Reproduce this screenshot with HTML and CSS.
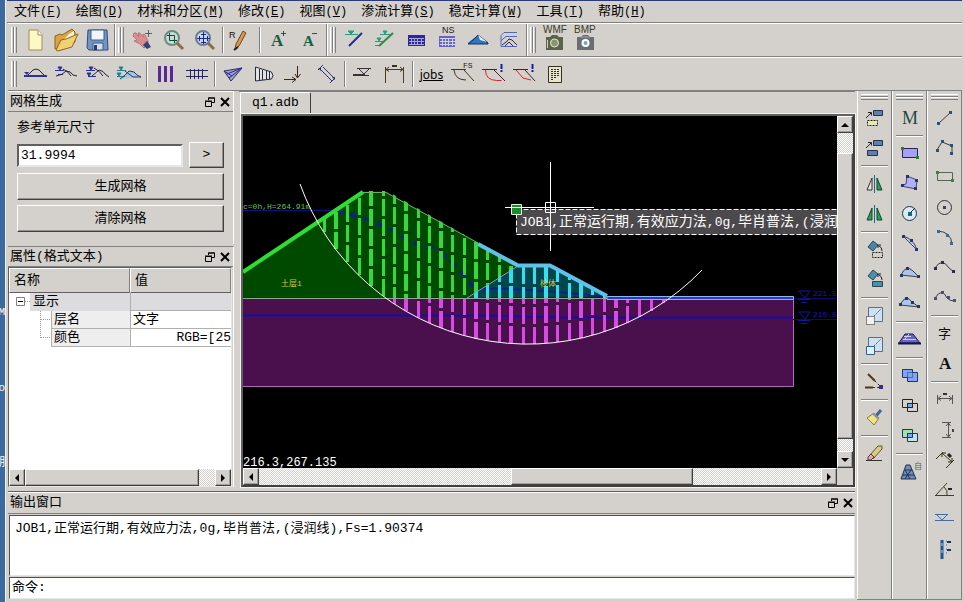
FILE: index.html
```html
<!DOCTYPE html>
<html lang="zh-CN">
<head>
<meta charset="utf-8">
<title>q1.adb</title>
<link rel="stylesheet" href="styles.css">
</head>
<body>
<aside class="desktop"><span class="d1">M</span><span class="d2">o</span><span class="d3">期</span></aside>
<div class="app">
<nav class="menubar">
<button>文件<kbd>(<u>F</u>)</kbd></button><button>绘图<kbd>(<u>D</u>)</kbd></button><button>材料和分区<kbd>(<u>M</u>)</kbd></button><button>修改<kbd>(<u>E</u>)</kbd></button><button>视图<kbd>(<u>V</u>)</kbd></button><button>渗流计算<kbd>(<u>S</u>)</kbd></button><button>稳定计算<kbd>(<u>W</u>)</kbd></button><button>工具<kbd>(<u>T</u>)</kbd></button><button>帮助<kbd>(<u>H</u>)</kbd></button>
</nav>

<div class="toolbar">
<div class="group"><i class="grip"></i>
<button aria-label="新建"><svg viewBox="0 0 31 30"><path d="M9 5h9l4 5v15H9z" fill="#fdf8c4" stroke="#9c8f55"/><path d="M18 5v5h4" fill="#fff" stroke="#9c8f55"/></svg></button>
<button aria-label="打开"><svg viewBox="0 0 31 30"><path d="M4 24V11l5-2 2 1 10-6 3 3v10z" fill="#d9a441" stroke="#8a6420"/><path d="M7 21 18 9l5-3v6z" fill="#fff6d8" stroke="none"/><path d="M5 25l5-10 5-1 12-5-6 13-14 4z" fill="#f3cf73" stroke="#8a6420"/></svg></button>
<button aria-label="保存"><svg viewBox="0 0 31 30"><path d="M6 5l19 0 1 20-19 0-2-2z" fill="#6f97c4" stroke="#2f4c78"/><path d="M9 5h13v10H9z" fill="#f2f6fb" stroke="#3c5a85"/><path d="M11 18h10v7H11z" fill="#d7dde6" stroke="#3c5a85"/><path d="M12 20h3v5h-3z" fill="#26406b" stroke="none"/></svg></button>
</div>
<div class="group"><i class="grip"></i>
<button aria-label="平移"><svg viewBox="0 0 31 30"><path d="M7 8l2 0 3 4-1-4 2 0 3 4 0-3 2 1 3 6 0 4-4 3-4-4-6-3 3-1-4-4z" fill="#d98f92" stroke="#b9747a"/><path d="M16 20l4-4 4 6-4 2z" fill="#38407a" stroke="none"/><path d="M21.500 5v7M18 8.500h7" stroke="#47627e"/></svg></button>
<button aria-label="窗口缩放"><svg viewBox="0 0 31 30"><circle cx="14" cy="13" r="7" fill="#c9ddd8" stroke="#6e8886" stroke-width="2"/><path d="M11.500 10.500h5v5h-5zM9 10.500h2M16 15.500h3M11.500 8v3M16.500 15v3" stroke="#124b34"/><path d="M19 18l6 6" stroke="#8c6d47" stroke-width="3"/></svg></button>
<button aria-label="全部缩放"><svg viewBox="0 0 31 30"><circle cx="14" cy="13" r="7" fill="#cbd6ec" stroke="#6e7d96" stroke-width="2"/><path d="M14.500 7v12M8 13.500h13M12 9.500h5M12 17.500h5M10.500 11v5M18.500 11v5" stroke="#172a7c"/><path d="M19 18l6 6" stroke="#8c6d47" stroke-width="3"/></svg></button>
<i class="sep"></i>
<button aria-label="重画"><svg viewBox="0 0 31 30"><text x="3" y="13" class="f9" fill="#111">R</text><path d="M9 24l1-5L17 6l3 2-7 13z" fill="#d69a4d" stroke="#6a4820"/><path d="M8 25l4-3" stroke="#222" stroke-width="2"/></svg></button>
<i class="sep"></i>
<button aria-label="放大文字"><svg viewBox="0 0 31 30"><text x="8" y="21" class="serif f16" fill="#11633e">A</text><path d="M18 8.500h5M20.500 6v5" stroke="#11633e"/></svg></button>
<button aria-label="缩小文字"><svg viewBox="0 0 31 30"><text x="9" y="21" class="serif f14" fill="#11633e">A</text><path d="M18 8.500h5" stroke="#11633e"/></svg></button>
</div>
<div class="group"><i class="grip"></i>
<button aria-label="水位线"><svg viewBox="0 0 31 30"><path d="M6 9.500h13M9 6l3 3 3-3z" fill="#2d9c7a" stroke="#2d9c7a"/><path d="M23 8L10 21" stroke="#21308f" stroke-width="2"/></svg></button>
<button aria-label="水位变化"><svg viewBox="0 0 31 30"><path d="M10 9.500h11M13 6l2 3 2-3zM5 16.500h9M7 13l2 3 2-3zM5 20.500h6" fill="#2d9c7a" stroke="#2d9c7a"/><path d="M23 8L9 21" stroke="#2c8c50" stroke-width="2"/></svg></button>
<button aria-label="表格"><svg viewBox="0 0 31 30"><path d="M7 10h17v11H7z" fill="#2b279c" stroke="none"/><path d="M10.500 13v7M13.500 13v7M16.500 13v7M20.500 13v7M8 13.500h15M8 16.500h15M8 19.500h15" stroke="#a6a5de"/></svg></button>
<button aria-label="NS 表格"><svg viewBox="0 0 31 30"><text x="10" y="8" class="f9" fill="#222">NS</text><path d="M7 11h16v11H7z" fill="#6a65bc" stroke="none"/><path d="M10.500 13v8M13.500 13v8M16.500 13v8M20.500 13v8M8 13.500h15M8 16.500h15M8 19.500h15" stroke="#d2d1f0"/></svg></button>
<button aria-label="浸润区"><svg viewBox="0 0 31 30"><path d="M5 18q6-5 10-8l10 7v2H5z" fill="#2f75c0" stroke="none"/><path d="M5 19q7-5 10-9l10 8v1z" stroke="#14325c"/><path d="M15 10l9 7-7-2z" fill="#e5edf5" stroke="none"/></svg></button>
<button aria-label="等值线"><svg viewBox="0 0 31 30"><path d="M23 7.500H10l-3 3v11M23 11.500H12l-5 4M7 21.500h16" stroke="#5267b8"/><path d="M8 20q5-3 7-6l3 1 5 5M11 21l4-4 4 4" stroke="#222c60"/></svg></button>
</div>
<div class="group last"><i class="grip"></i>
<button aria-label="WMF"><svg viewBox="0 0 31 30"><text x="4" y="8" class="f10" fill="#3c3a1e">WMF</text><path d="M7 12h4l2-2h5l2 2h4v13H7z" fill="#5c6447" stroke="none"/><circle cx="15.500" cy="18" r="4" fill="#8b9472" stroke="#e5e8da"/><path d="M8.500 15v8" stroke="#cdd2bd"/></svg></button>
<button aria-label="BMP"><svg viewBox="0 0 31 30"><text x="4" y="8" class="f10" fill="#3c3a1e">BMP</text><path d="M7 12h4l2-2h5l2 2h4v13H7z" fill="#6c6d72" stroke="none"/><circle cx="15.500" cy="18" r="3" fill="#72a3c9" stroke="#fff" stroke-width="2"/><path d="M10 12h10" stroke="#a6a8b0"/></svg></button>
</div>
</div>

<div class="toolbar">
<div class="group last"><i class="grip"></i>
<button aria-label="断面"><svg viewBox="0 0 31 30"><path d="M4 17h23" stroke="#2b2f99" stroke-width="2"/><path d="M8 16l5-5q3-2 6 0l5 5" stroke="#223"/><path d="M4 13h5l-2 3z" fill="#2b2f99" stroke="none"/></svg></button>
<button aria-label="稳定渗流"><svg viewBox="0 0 31 30"><path d="M4 11.500h9M7 15.500h5M7 8h4l-2 3z" fill="#2b2f99" stroke="#2b2f99"/><path d="M5 17q7-1 10-5 5 0 7 4l4 1M12 10q6 3 8 7" stroke="#223"/></svg></button>
<button aria-label="水位降落"><svg viewBox="0 0 31 30"><path d="M4 11.500h9M6 17.500h8M7 8h4l-2 3zM5 14h4l-2 3z" fill="#2b2f99" stroke="#2b2f99"/><path d="M10 17q5-4 7-6 5 1 6 4l4 3M12 9q6 3 9 8" stroke="#223"/></svg></button>
<button aria-label="非稳定渗流"><svg viewBox="0 0 31 30"><path d="M7 20q6-4 9-8 6 1 9 6z" fill="#a6c5df" stroke="none"/><path d="M4 11.500h9M4 17.500h8M6 8h4l-2 3zM4 14h4l-2 3z" fill="#277a8c" stroke="#277a8c"/><path d="M7 20q6-4 9-8 6 0 8 4l4 2h-8l-8-6" stroke="#223a66"/></svg></button>
<i class="sep"></i>
<button aria-label="竖向划分"><svg viewBox="0 0 31 30"><path d="M9.500 7v16M15.500 7v16M21.500 7v16" stroke="#5b2798" stroke-width="3"/></svg></button>
<button aria-label="横向划分"><svg viewBox="0 0 31 30"><path d="M5 11.500h22M5 17.500h22M9.500 10v10M13.500 10v10M17.500 10v10M21.500 10v10" stroke="#26265f"/></svg></button>
<i class="sep"></i>
<button aria-label="三角荷载"><svg viewBox="0 0 31 30"><path d="M6 12L24 9 13 22zM9 15l15-6M11 19l13-10M6 12l8 5" fill="#9fa2d4" stroke="#2a2d75"/></svg></button>
<button aria-label="梯形荷载"><svg viewBox="0 0 31 30"><path d="M6.500 8v14l16-2q3-3 0-7zM10.500 10v11M13.500 11v10M17.500 12v8M20.500 13v7" fill="#e1e2e5" stroke="#222b3a"/></svg></button>
<button aria-label="集中力"><svg viewBox="0 0 31 30"><path d="M17.500 7v11M15 15l2.500 4 3-4M4 20.500h12M12 18l4 2.500-4 3" stroke="#3e2414"/></svg></button>
<button aria-label="锚杆"><svg viewBox="0 0 31 30"><path d="M9 10L21 22M12 8l12 12M7 11l5-5M19 24l5-5" stroke="#2a3478"/><path d="M7 9h3v3zM21 18h3v3z" fill="#2a3478" stroke="none"/></svg></button>
<i class="sep"></i>
<button aria-label="水面"><svg viewBox="0 0 31 30"><path d="M9 9.500h14M11 10l5 5 5-5M5 16.500h16" stroke="#3b2f38"/><path d="M5 16h12" stroke="#3b2f38" stroke-width="2"/></svg></button>
<button aria-label="标注"><svg viewBox="0 0 31 30"><path d="M6.500 8v16M24.500 8v16M7 10.500h17M10 8l-3 2.500 3 2M21 8l3 2.500-3 2" stroke="#4b3b1f"/><path d="M13 7h5" stroke="#3b2f18" stroke-width="2"/></svg></button>
<i class="sep"></i>
<button class="jobs"><u>jobs</u></button>
<button aria-label="安全系数"><svg viewBox="0 0 31 30"><text x="16" y="9" class="f8" fill="#2b1b16">FS</text><path d="M4 10.500h15M7 11q1 10 12 10M17 11L27 22" stroke="#3d332b"/></svg></button>
<button aria-label="搜索圆弧"><svg viewBox="0 0 31 30"><path d="M7.500 11q0 10 11 10.500h5" stroke="#d6252b"/><path d="M4 10.500h15M16 11L27 22" stroke="#4a2327"/><path d="M23.500 5v5M23.500 11v2" stroke="#17209b" stroke-width="2"/></svg></button>
<button aria-label="搜索折线"><svg viewBox="0 0 31 30"><path d="M7 11l7 8 8 2" stroke="#d6252b"/><path d="M4 10.500h15M16 11L26 22" stroke="#4a2327"/><path d="M23.500 5v5M23.500 11v2" stroke="#17209b" stroke-width="2"/></svg></button>
<button aria-label="报告"><svg viewBox="0 0 31 30"><path d="M8.500 7.500h13v16h-13z" fill="#e6e3cf" stroke="#33301d"/><path d="M11 10.500h9M11 12.500h9M11 14.500h9M11 16.500h9M11 18.500h6M11 20.500h3" stroke="#33301d" stroke-dasharray="2 1"/></svg></button>
</div>
</div>

<main class="work">
<div class="left">
<div class="upper">
<div class="docks">
<section class="dock">
<header class="title"><h2>网格生成</h2><button aria-label="浮动"><svg viewBox="0 0 10 10"><path d="M3.500 3V1h6v4.500H7M3 1h7M.5 4.500h6v5h-6zM0 4h7" /></svg></button><button aria-label="关闭"><svg viewBox="0 0 10 10"><path d="M1 1l8 8M9 1L1 9" stroke-width="2"/></svg></button></header>
<form class="mesh">
<label for="size">参考单元尺寸</label>
<div class="line"><input id="size" type="text" value="31.9994"><button type="button" class="push">&gt;</button></div>
<button type="button" class="push">生成网格</button>
<button type="button" class="push">清除网格</button>
</form>
</section>
<section class="dock props">
<header class="title"><h2>属性(格式文本)</h2><button aria-label="浮动"><svg viewBox="0 0 10 10"><path d="M3.500 3V1h6v4.500H7M3 1h7M.5 4.500h6v5h-6zM0 4h7" /></svg></button><button aria-label="关闭"><svg viewBox="0 0 10 10"><path d="M1 1l8 8M9 1L1 9" stroke-width="2"/></svg></button></header>
<div class="sheet">
<table>
<colgroup><col class="c1"><col class="c2"><col></colgroup>
<thead><tr><th colspan="2">名称</th><th>值</th></tr></thead>
<tbody>
<tr class="cat"><td colspan="2" class="parent"><div><svg viewBox="0 0 21 18"><path d="M7.500 4.500h8v8h-8z" stroke="#808080"/><path d="M9 8.500h5" stroke="#000"/><path d="M16 8.500h5" stroke="#999" stroke-dasharray="1 1"/></svg><span>显示</span></div></td><td></td></tr>
<tr><td class="tree"><svg viewBox="0 0 42 18"><path d="M31.500 0v18M32 8.500h9" stroke="#999" stroke-dasharray="1 1"/></svg></td><td class="name">层名</td><td>文字</td></tr>
<tr><td class="tree"><svg viewBox="0 0 42 18"><path d="M31.500 0v9M32 8.500h9" stroke="#999" stroke-dasharray="1 1"/></svg></td><td class="name">颜色</td><td class="num">RGB=[25</td></tr>
</tbody>
</table>
<div class="hbar"><button aria-label="向左"><svg viewBox="0 0 8 8"><path d="M6 0v8L2 4z"/></svg></button><i class="thumb wide"></i><i class="rest"></i><button aria-label="向右"><svg viewBox="0 0 8 8"><path d="M2 0v8l4-4z"/></svg></button></div>
</div>
</section>
</div>

<section class="view">
<div class="tabs"><button class="tab">q1.adb</button></div>
<div class="frame">
<svg class="drawing" viewBox="243 116 594 352" preserveAspectRatio="xMinYMin slice">
<defs>
<clipPath id="green"><path d="M243 272L363 191H387L518 265 467 298H243z"/></clipPath>
<clipPath id="cyan"><path d="M518 264H551L610 298H467z"/></clipPath>
<clipPath id="violet"><path d="M243 298H793V387H243z"/></clipPath>
<g id="slices">
<path stroke-width="3" stroke-dasharray="17 3" d="M324.500 232V190M347.500 262V190M359.500 275V190M383.500 296V180M394.500 304V180M418.500 318V180M429.500 323V180M452.500 332V180M464.500 335V180M487.500 340V180M499.500 342V180M523.500 344V180M534.500 344V180M557.500 342V180M569.500 340V180M592.500 335V180M604.500 332V180M627.500 323V180M639.500 317V180M651.500 311V180M663.500 303V180"/>
<path stroke-width="4" stroke-dasharray="17 3" d="M336 249V180M371 286V180M406 311V180M441 328V180M476 339V180M511 343V180M546 343V180M581 338V180M616 328V180"/>
</g>
</defs>
<path d="M243 272L363 192H386L518 265 467 298H243z" fill="#004a00"/>
<path d="M518 265H550L607 297 467 298z" fill="#00474d"/>
<path d="M243 298.500H793.500V386.500H243" fill="#4a104d" stroke="#b06ab8"/>
<path d="M243 210.500H336" stroke="#101080"/>
<path d="M336 211Q375 219 400 235T430 248 455 266 473 288" stroke="#10208a" stroke-width="3" stroke-dasharray="9 5"/>
<path d="M473 288Q520 289 546 291T607 297" stroke="#10208a" stroke-width="2"/>
<path d="M243 315.500H480L560 317.500H793" stroke="#1a0aa8" stroke-width="2"/>
<g clip-path="url(#green)"><use href="#slices" stroke="#35da3a"/></g>
<g clip-path="url(#cyan)"><use href="#slices" stroke="#35e0ee"/></g>
<g clip-path="url(#violet)"><use href="#slices" stroke="#d84be0"/></g>
<path d="M793 298.500H837M793 319.500H837" stroke="#0c0c70"/>
<path d="M243 298.500H610M467 298L518 266" stroke="#8fa896"/>
<path d="M607 296.500H793.500V299.500H607z" fill="#1f3cc8" stroke="#8fb4f0"/>
<path d="M363 192.500H386L478 243" stroke="#6fae6a"/>
<path d="M243 272L363 192" stroke="#2fdc34" stroke-width="4"/>
<path d="M478 244L518 265.500H550L607 296" stroke="#5fc0e8" stroke-width="4"/>
<path d="M300 184A242 242 0 0 0 702 270" stroke="#fff"/>
<g stroke="#1414a8"><path d="M799 291h11l-5 7zM798 299.500h12M801 302.500h6M799 312h11l-5 7zM798 320.500h12M801 323.500h6"/></g>
<g class="f8"><text x="243" y="209" fill="#63c065">c=0h,H=264.91m</text><text x="813" y="296" fill="#1818b4">221.5</text><text x="813" y="317" fill="#1818b4">210.5</text><text x="281" y="286" fill="#d0c64a">土层1</text><text x="540" y="286" fill="#d0c64a">棱体</text></g>
<path d="M516.500 209.500H860V234.500H516.500z" fill="#4b494b" stroke="#fff" stroke-dasharray="5 2"/>
<path d="M511.500 204.500h10v10h-10z" fill="#1f8a2a" stroke="#dff5df"/>
<text class="note" x="520" y="226" fill="#fff">JOB1,<tspan>正常运行期</tspan>,<tspan>有效应力法</tspan>,0g,<tspan>毕肖普法</tspan>,(<tspan>浸润</tspan></text>
<path d="M505 207.500H594M550.500 162V251M545.500 202.500h10v10h-10z" stroke="#fff"/>
<text class="coord" x="243" y="466" fill="#fff">216.3,267.135</text>
</svg>
<div class="vbar"><button aria-label="向上"><svg viewBox="0 0 8 8"><path d="M0 6h8L4 2z"/></svg></button><i class="gap"></i><i class="thumb tall"></i><i class="low"></i><button aria-label="向下"><svg viewBox="0 0 8 8"><path d="M0 2h8L4 6z"/></svg></button></div>
<div class="hbar"><button aria-label="向左"><svg viewBox="0 0 8 8"><path d="M6 0v8L2 4z"/></svg></button><i class="before"></i><i class="thumb mid"></i><i class="after"></i><button aria-label="向右"><svg viewBox="0 0 8 8"><path d="M2 0v8l4-4z"/></svg></button></div>
</div>
</section>
</div>

<section class="dock output">
<header class="title"><h2>输出窗口</h2><button aria-label="浮动"><svg viewBox="0 0 10 10"><path d="M3.500 3V1h6v4.500H7M3 1h7M.5 4.500h6v5h-6zM0 4h7" /></svg></button><button aria-label="关闭"><svg viewBox="0 0 10 10"><path d="M1 1l8 8M9 1L1 9" stroke-width="2"/></svg></button></header>
<div class="log">JOB1,正常运行期,有效应力法,0g,毕肖普法,(浸润线),Fs=1.90374</div>
<div class="command"><label for="cmd">命令:</label><input id="cmd" type="text"></div>
</section>
</div>

<div class="palettes">
<div class="palette"><i class="grip"></i>
<button aria-label="移动"><svg viewBox="0 0 30 30"><path d="M13.500 7.500h9v5h-9z" fill="#5f7fae" stroke="#26324a"/><path d="M7.500 17.500h10v5h-10z" fill="#e8e7b4" stroke="#222" stroke-dasharray="2 1"/><path d="M6 15l5-5M8 9.500h3.500v3" stroke="#222"/></svg></button>
<button aria-label="复制"><svg viewBox="0 0 30 30"><path d="M13.500 7.500h9v5h-9zM7.500 17.500h10v5h-10z" fill="#5f7fae" stroke="#26324a"/><path d="M6 15l5-5M8 9.500h3.500v3" stroke="#222"/></svg></button>
<i class="sep"></i>
<button aria-label="镜像移动"><svg viewBox="0 0 30 30"><path d="M12 9v12H7z" fill="#e5e5e5" stroke="#333"/><path d="M17 9v12h5z" fill="#2e9a63" stroke="#14452c"/><path d="M14.500 6v18" stroke="#1b6a86"/></svg></button>
<button aria-label="镜像复制"><svg viewBox="0 0 30 30"><path d="M12 9v12H7zM17 9v12h5z" fill="#2e9a63" stroke="#14452c"/><path d="M14.500 6v18" stroke="#1b6a86"/></svg></button>
<i class="sep"></i>
<button aria-label="旋转移动"><svg viewBox="0 0 30 30"><path d="M8 12l5-6 5 4-5 6z" fill="#4b83a8" stroke="#254759"/><path d="M12.500 17.500h10v5h-10z" stroke="#222" stroke-dasharray="2 1"/><path d="M19 11q3 1 3 5M18 13v-3h3" stroke="#222"/></svg></button>
<button aria-label="旋转复制"><svg viewBox="0 0 30 30"><path d="M8 11l5-6 5 4-5 6zM12.500 16.500h10v5h-10z" fill="#4b90a8" stroke="#254759"/><path d="M19 10q3 1 3 5M18 12v-3h3" stroke="#222"/></svg></button>
<i class="sep"></i>
<button aria-label="缩放移动"><svg viewBox="0 0 30 30"><path d="M8.500 6.500h14v14h-14z" fill="#cfe0ef" stroke="#50708e"/><path d="M6.500 15.500h8v8h-8z" fill="#f2f2f2" stroke="#222" stroke-dasharray="1 1"/><path d="M14 15l7-7" stroke="#4c6684" stroke-dasharray="2 1"/></svg></button>
<button aria-label="缩放复制"><svg viewBox="0 0 30 30"><path d="M8.500 6.500h14v14h-14z" fill="#cfe0ef" stroke="#50708e"/><path d="M6.500 15.500h8v8h-8z" fill="#e1f1fa" stroke="#2e628e"/><path d="M14 15l7-7" stroke="#4c6684" stroke-dasharray="2 1"/></svg></button>
<i class="sep"></i>
<button aria-label="延伸"><svg viewBox="0 0 30 30"><path d="M8 7l7 7M5 20.500h8" stroke="#4b3a12" stroke-width="2"/><path d="M15 14l6 6M13 20.500h9" stroke="#33263a" stroke-dasharray="2 2"/><path d="M19 18h4v4h-4z" fill="#3b2c86" stroke="none"/></svg></button>
<i class="sep"></i>
<button aria-label="格式刷"><svg viewBox="0 0 30 30"><path d="M21 7l-5 6" stroke="#49628f" stroke-width="3"/><path d="M14 10l5 5-5 7-7-7z" fill="#efe287" stroke="#8a7a35"/><path d="M14 10l5 5-2 1-5-5z" fill="#8696b3" stroke="none"/></svg></button>
<i class="sep"></i>
<button aria-label="删除"><svg viewBox="0 0 30 30"><path d="M10 16L18 7h4v3L13 20z" fill="#d8cd82" stroke="#5c5632"/><path d="M8 18l3-3 3 3-3 3H8z" fill="#e6a7aa" stroke="#60383a"/><path d="M6 21.500h16" stroke="#333"/></svg></button>
</div>
<div class="palette"><i class="grip"></i>
<button aria-label="材料"><svg viewBox="0 0 30 30"><text x="7" y="21" class="roman f18" fill="#1d4a45">M</text></svg></button>
<i class="sep"></i>
<button aria-label="矩形区"><svg viewBox="0 0 30 30"><path d="M7.500 9.500h15v9h-15z" fill="#a6a0f2" stroke="#25245a"/><path d="M6 8h3v3H6zM21 17h3v3h-3z" fill="#2f7d33" stroke="none"/></svg></button>
<button aria-label="多边形区"><svg viewBox="0 0 30 30"><path d="M12 7l10 4-1 9-15-3 5-2z" fill="#b4b0f5" stroke="#39467a"/><path d="M11 6h3v3h-3zM20 10h3v3h-3zM19 18h3v3h-3zM6 15h3v3H6z" fill="#26366d" stroke="none"/></svg></button>
<button aria-label="圆形区"><svg viewBox="0 0 30 30"><circle cx="14.500" cy="14.500" r="7" fill="#d9ecf5" stroke="#22303d"/><path d="M14 15l6-6" stroke="#1b2e7e"/><path d="M13 13h4v4h-4z" fill="#1b648a" stroke="none"/></svg></button>
<button aria-label="弓形区"><svg viewBox="0 0 30 30"><path d="M8 7q11 3 14 14z" fill="#c7cbef" stroke="#38424f"/><path d="M7 6h3v3H7zM15 10h3v3h-3zM20 19h3v3h-3z" fill="#26366d" stroke="none"/></svg></button>
<button aria-label="弧形区"><svg viewBox="0 0 30 30"><path d="M6 16q5-11 12-4l6 6z" fill="#abc4ec" stroke="#38424f"/><path d="M5 15h3v3H5zM11 8h3v3h-3zM22 16h3v3h-3z" fill="#26366d" stroke="none"/></svg></button>
<button aria-label="曲线区"><svg viewBox="0 0 30 30"><path d="M5 16q6-12 12-3l7 5z" fill="#abc4ec" stroke="#38424f"/><path d="M4 14h3v3H4zM10 8h3v3h-3zM16 12h3v3h-3zM22 16h3v3h-3z" fill="#26366d" stroke="none"/></svg></button>
<i class="sep"></i>
<button aria-label="坝体"><svg viewBox="0 0 30 30"><path d="M4 18l6-9h8l7 9z" fill="#6764cc" stroke="#171742"/><path d="M8 14.500h13M14 9l-4 5M16 11.500H9" stroke="#d0cef4"/><path d="M3 18.500h23" stroke="#171742" stroke-width="2"/></svg></button>
<i class="sep"></i>
<button aria-label="并集"><svg viewBox="0 0 30 30"><path d="M7.500 8.500h10v3h5v9h-10v-4h-5z" fill="#7fa5f5" stroke="#1f3668"/><path d="M12.500 11.500h5v5h-5z" stroke="#1f3668" stroke-dasharray="1 1"/></svg></button>
<button aria-label="交集"><svg viewBox="0 0 30 30"><path d="M7.500 8.500h10v8h-10zM12.500 12.500h10v8h-10z" stroke="#222"/><path d="M12.500 12.500h5v4h-5z" fill="#7fa5f5" stroke="#222"/></svg></button>
<button aria-label="差集"><svg viewBox="0 0 30 30"><path d="M7.500 8.500h10v8h-10z" fill="#9fe0b4" stroke="#1c3950"/><path d="M12.500 12.500h10v8h-10z" fill="#bfe5f2" stroke="#1c3950"/><path d="M12.500 12.500h5v4h-5z" fill="#7fa5f5" stroke="#1c3950"/></svg></button>
<i class="sep"></i>
<button aria-label="自动网格"><svg viewBox="0 0 30 30"><path d="M6 22l5-14h4l6 14z" fill="#6f8db5" stroke="#1f3156"/><path d="M10 13h7M8 18h11M10 13l5 9M16 13l-6 9" stroke="#1f3156"/><text x="19" y="12" class="f8" fill="#1d7a6a">自</text></svg></button>
</div>
<div class="palette"><i class="grip"></i>
<button aria-label="直线"><svg viewBox="0 0 30 30"><path d="M8 21L21 9" stroke="#3b3b3b"/><path d="M7 19h3v3H7zM19 8h3v3h-3z" fill="#2b5075" stroke="none"/></svg></button>
<button aria-label="折线"><svg viewBox="0 0 30 30"><path d="M7 17l5-8 10 4v7" stroke="#3b3b3b"/><path d="M6 16h3v3H6zM11 7h3v3h-3zM20 11h3v3h-3zM20 19h3v3h-3z" fill="#2b5075" stroke="none"/></svg></button>
<button aria-label="矩形"><svg viewBox="0 0 30 30"><path d="M7.500 9.500h15v8h-15z" stroke="#5a6454"/><path d="M6 8h3v3H6zM21 16h3v3h-3z" fill="#2f8b33" stroke="none"/></svg></button>
<button aria-label="圆"><svg viewBox="0 0 30 30"><circle cx="14.500" cy="14.500" r="7" stroke="#333"/><path d="M13 13h3v3h-3z" fill="#5a3555" stroke="none"/></svg></button>
<button aria-label="圆弧"><svg viewBox="0 0 30 30"><path d="M8 8q13 1 14 13" stroke="#3b3b3b"/><path d="M7 7h3v3H7zM16 11h3v3h-3zM20 19h3v3h-3z" fill="#3b6b93" stroke="none"/></svg></button>
<button aria-label="弧线"><svg viewBox="0 0 30 30"><path d="M5 15q7-11 14 0l5 4" stroke="#3b3b3b"/><path d="M4 14h3v3H4zM11 8h3v3h-3zM22 17h3v3h-3z" fill="#26304d" stroke="none"/></svg></button>
<button aria-label="样条曲线"><svg viewBox="0 0 30 30"><path d="M5 15q7-11 12 0 3 3 7 3" stroke="#3b3b3b"/><path d="M4 14h3v3H4zM11 8h3v3h-3zM17 13h3v3h-3zM23 16h3v3h-3z" fill="#4a5075" stroke="none"/></svg></button>
<i class="sep"></i>
<button aria-label="文字"><svg viewBox="0 0 30 30"><text x="8" y="19" class="f13" fill="#111">字</text></svg></button>
<button aria-label="字体"><svg viewBox="0 0 30 30"><text x="9" y="20" class="serif f16" fill="#111">A</text></svg></button>
<i class="sep"></i>
<button aria-label="水平标注"><svg viewBox="0 0 30 30"><path d="M7.500 10v9M22.500 10v9M8 13.500h14M11 11l-3 2.500 3 2M19 11l3 2.500-3 2" stroke="#555"/><path d="M13 9h4" stroke="#333" stroke-width="2"/></svg></button>
<button aria-label="垂直标注"><svg viewBox="0 0 30 30"><path d="M12 7.500h9M12 22.500h9M18.500 8v14M16 11l2.500-3 2 3M16 19l2.500 3 2-3" stroke="#555"/><path d="M22 14h2v3h-2z" fill="#444" stroke="none"/></svg></button>
<button aria-label="对齐标注"><svg viewBox="0 0 30 30"><path d="M6 14l7-7M16 23l8-8M12 8l10 9M12 12V8h4M18 17h4v-4" stroke="#2d3514"/><path d="M18 9l3 3" stroke="#222" stroke-width="3"/></svg></button>
<button aria-label="角度标注"><svg viewBox="0 0 30 30"><path d="M5 20.500h19M6 20L17 8M14 12q4 3 3 8" stroke="#39421a"/><path d="M18 14h4" stroke="#222" stroke-width="2"/></svg></button>
<button aria-label="水位标注"><svg viewBox="0 0 30 30"><path d="M5 9.500h13M7 10l5 5 5-5M5 15.500h19" stroke="#3f6da3"/></svg></button>
<button aria-label="柱状图"><svg viewBox="0 0 30 30"><path d="M12 5v19" stroke="#1f568f" stroke-width="3"/><path d="M12 8v3M12 15v3" stroke="#bcd0e3"/><path d="M17 7h4M17 15h4" stroke="#1d3550" stroke-width="2"/><path d="M16.500 5v16" stroke="#7ba0c6" stroke-dasharray="2 2"/></svg></button>
</div>
</div>
</main>
</div>
</body>
</html>
```
FILE: styles.css
```css
* { box-sizing: border-box; }
html, body { height: 100%; }
body {
  margin: 0;
  display: flex;
  overflow: hidden;
  background: #d4d0cb;
  color: #000;
  font: 13px/18px "Liberation Mono", "Noto Sans CJK SC", monospace;
}
button, input {
  margin: 0;
  padding: 0;
  border: 0;
  background: none;
  color: inherit;
  font: inherit;
  outline: none;
}
svg { display: block; fill: none; stroke: #222; }
svg text { stroke: none; }
i { display: block; flex: none; }

.f8 { font-size: 8px; }
.f9 { font: 9px "Liberation Sans", sans-serif; }
.f10 { font: 10px "Liberation Sans", sans-serif; }
.f13 { font-size: 13px; }
.serif { font-family: "Liberation Serif", serif; font-weight: bold; }
.roman { font-family: "Liberation Serif", serif; }
.f14 { font-size: 15px; }
.f16 { font-size: 17px; }
.f18 { font-size: 18px; }

.desktop {
  position: relative;
  flex: none;
  width: 5px;
  overflow: hidden;
  background: #3a6a9f;
  color: #fff;
  font-size: 11px;
}
.desktop span { position: absolute; right: 0; }
.d1 { top: 303px; }
.d2 { top: 379px; }
.d3 { top: 454px; }

.app {
  flex: 1;
  min-width: 0;
  display: flex;
  flex-direction: column;
  padding: 0 2px;
  border-left: 1px solid #f4f2ef;
}

.menubar {
  flex: none;
  display: flex;
  height: 23px;
  border-top: 1px solid #2a3b78;
  border-bottom: 1px solid #808080;
  margin-left: -1px;
}
.menubar button { padding: 0 7px; white-space: nowrap; }
.menubar kbd { font: 12px "Liberation Mono", monospace; }

.toolbar {
  flex: none;
  display: flex;
  height: 34px;
  border-top: 1px solid #fff;
  border-bottom: 1px solid #808080;
}
.group {
  display: flex;
  align-items: center;
  padding-right: 1px;
  border-left: 1px solid #fff;
  border-right: 1px solid #808080;
}
.group:first-child { border-left-color: transparent; }
.group.last { border-right: 0; }
.group button svg { width: 31px; height: 30px; }
.group .grip {
  width: 6px;
  height: 26px;
  margin: 0 3px 0 2px;
  background: repeating-linear-gradient(to right, #fff 0 1px, #d4d0cb 1px 2px, #808080 2px 3px);
}
.group .sep {
  width: 2px;
  height: 26px;
  margin: 0 2px;
  border-left: 1px solid #808080;
  border-right: 1px solid #fff;
}
.group .jobs { width: 31px; font: 12px "Noto Sans", sans-serif; }

.work { flex: 1; min-height: 0; display: flex; }
.left {
  flex: 1;
  min-width: 0;
  display: flex;
  flex-direction: column;
  gap: 4px;
  padding-bottom: 3px;
}
.upper { flex: 1; min-height: 0; display: flex; gap: 5px; }
.docks {
  flex: none;
  width: 226px;
  display: flex;
  flex-direction: column;
  gap: 2px;
}
.dock { border-top: 1px solid #fff; border-right: 1px solid #fff; }
.title {
  display: flex;
  align-items: center;
  height: 20px;
  padding: 0 1px 0 2px;
  border-bottom: 1px solid #808080;
}
.title h2 { flex: 1; margin: 0; font: inherit; }
.title button { width: 15px; }
.title button svg { width: 10px; height: 10px; margin: 0 auto; stroke: #000; }

.mesh {
  display: flex;
  flex-direction: column;
  gap: 5px;
  padding: 7px 9px 12px;
}
.mesh .line { display: flex; gap: 6px; }
.mesh input {
  flex: 1;
  min-width: 0;
  height: 23px;
  margin-top: 2px;
  padding: 0 2px;
  background: #fff;
  border: 2px solid;
  border-color: #606060 #e8e6e2 #e8e6e2 #606060;
}
.push {
  height: 27px;
  border: 1px solid;
  border-color: #fff #404040 #404040 #fff;
  box-shadow: inset -1px -1px #909090;
}
.line .push { width: 35px; height: 26px; }

.props { flex: 1; min-height: 0; display: flex; flex-direction: column; border-top-color: #808080; }
.sheet {
  flex: 1;
  min-height: 0;
  display: flex;
  flex-direction: column;
  justify-content: space-between;
  margin: 0 1px 0 0;
  border: 1px solid;
  border-color: #606060 #e8e6e2 #e8e6e2 #606060;
  background: #fff;
}
.sheet table { width: 100%; border-collapse: separate; border-spacing: 0; table-layout: fixed; }
.c1 { width: 42px; }
.c2 { width: 79px; }
.sheet th {
  height: 25px;
  padding: 0 4px;
  text-align: left;
  font-weight: normal;
  background: #d4d0cb;
  border: 1px solid;
  border-color: #fff #808080 #606060 #fff;
}
.sheet td {
  height: 18px;
  line-height: 17px;
  padding: 0 2px;
  border-bottom: 1px solid #b0b0b0;
  border-left: 1px solid #b0b0b0;
}
.sheet td.tree, .sheet td.parent { padding: 0; border: 0; }
.tree svg { width: 42px; height: 18px; }
.parent div { display: flex; }
.parent svg { width: 21px; height: 18px; background: #fff; }
.parent span { padding-left: 3px; }
.sheet td.name { background: #eeeeee; }
.sheet .cat td { background: #dcdcde; }
.sheet td.num { padding: 0; text-align: right; }

.hbar, .vbar { display: flex; background: repeating-conic-gradient(#fff 0 25%, #d4d0cb 0 50%) 0 0 / 2px 2px; }
.hbar { height: 17px; }
.vbar { flex-direction: column; width: 16px; }
.hbar button, .vbar button, .thumb {
  flex: none;
  background: #d4d0cb;
  border: 1px solid;
  border-color: #fff #404040 #404040 #fff;
  box-shadow: inset -1px -1px #a0a0a0;
}
.hbar button { width: 16px; }
.vbar button { height: 17px; }
.hbar svg, .vbar svg { width: 8px; height: 8px; margin: 0 auto; fill: #000; stroke: none; }
.hbar .wide { flex: 11 1 0; }
.rest { flex: 1 1 0; }
.before { flex: 253 1 0; }
.hbar .mid { flex: 181 1 0; }
.after { flex: 128 1 0; }
.gap { flex: 20 1 0; }
.vbar .tall { flex: 286 1 0; }
.low { flex: 12 1 0; }

.view { flex: 1; min-width: 0; display: flex; flex-direction: column; border-top: 1px solid #808080; }
.tabs { flex: none; height: 22px; }
.tab {
  display: block;
  height: 22px;
  margin-left: 1px;
  padding: 0 11px;
  border: 1px solid;
  border-color: #fff #404040 transparent #fff;
  border-radius: 2px 2px 0 0;
}
.frame {
  flex: 1;
  min-height: 0;
  display: grid;
  grid-template-columns: 1fr 16px;
  grid-template-rows: 1fr 17px;
  margin-left: 2px;
  border: 2px solid;
  border-color: #606060 #404040 #404040 #606060;
  outline: 1px solid #f4f2ef;
}
.drawing { width: 100%; height: 100%; min-height: 0; background: #000; }
.coord { font-size: 12px; }
.note tspan { font-size: 14px; }

.output { flex: none; border-top: 1px solid #606060; border-right: 0; box-shadow: inset 0 1px #fff; }
.output .title { height: 22px; padding-right: 0; }
.log, .command {
  margin: 1px 0 0 1px;
  background: #fff;
  border: 1px solid;
  border-color: #505050 #e8e6e2 #e8e6e2 #505050;
}
.log { height: 61px; padding: 4px 5px; }
.command { display: flex; height: 22px; padding: 0 2px; line-height: 20px; }
.command input { flex: 1; }

.palettes { flex: none; display: flex; margin: 0 0 2px 2px; border-bottom: 1px solid #808080; }
.palette {
  display: flex;
  flex-direction: column;
  align-items: center;
  width: 35px;
  border-left: 1px solid #fff;
  border-right: 1px solid #808080;
}
.palette .grip {
  width: 27px;
  height: 6px;
  margin: 3px 0;
  background: repeating-linear-gradient(to bottom, #fff 0 1px, #d4d0cb 1px 2px, #808080 2px 3px);
}
.palette svg { width: 30px; height: 30px; }
.palette .sep {
  width: 27px;
  height: 2px;
  margin: 2px 0;
  border-top: 1px solid #808080;
  border-bottom: 1px solid #fff;
}
```
